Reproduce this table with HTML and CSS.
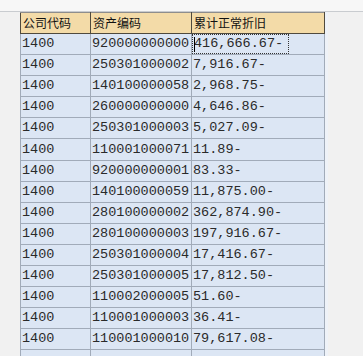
FILE: index.html
```html
<!DOCTYPE html>
<html>
<head>
<meta charset="utf-8">
<link rel="stylesheet" href="styles.css">
</head>
<body>
<div class="topbar"></div>
<div class="area">
<table class="grid">
<colgroup><col class="c1"><col class="c2"><col class="c3"></colgroup>
<thead>
<tr><th>公司代码</th><th>资产编码</th><th>累计正常折旧</th></tr>
</thead>
<tbody>
<tr><td>1400</td><td>920000000000</td><td><span class="focus"><span class="caret"></span>416,666.67-</span></td></tr>
<tr><td>1400</td><td>250301000002</td><td>7,916.67-</td></tr>
<tr><td>1400</td><td>140100000058</td><td>2,968.75-</td></tr>
<tr><td>1400</td><td>260000000000</td><td>4,646.86-</td></tr>
<tr><td>1400</td><td>250301000003</td><td>5,027.09-</td></tr>
<tr><td>1400</td><td>110001000071</td><td>11.89-</td></tr>
<tr><td>1400</td><td>920000000001</td><td>83.33-</td></tr>
<tr><td>1400</td><td>140100000059</td><td>11,875.00-</td></tr>
<tr><td>1400</td><td>280100000002</td><td>362,874.90-</td></tr>
<tr><td>1400</td><td>280100000003</td><td>197,916.67-</td></tr>
<tr><td>1400</td><td>250301000004</td><td>17,416.67-</td></tr>
<tr><td>1400</td><td>250301000005</td><td>17,812.50-</td></tr>
<tr><td>1400</td><td>110002000005</td><td>51.60-</td></tr>
<tr><td>1400</td><td>110001000003</td><td>36.41-</td></tr>
<tr><td>1400</td><td>110001000010</td><td>79,617.08-</td></tr>
<tr><td></td><td></td><td></td></tr>
</tbody>
</table>
</div>
</body>
</html>
```
FILE: styles.css
```css
html, body {
  margin: 0;
  padding: 0;
  background: #f1f1f1;
  overflow: hidden;
  height: 356px;
}
.topbar {
  height: 11px;
  background: #f7f7f7;
  border-bottom: 1px solid #c9ccd0;
}
.area {
  padding-left: 20px;
}
.grid {
  border-collapse: collapse;
  table-layout: fixed;
  width: 304px;
  box-shadow: 3px 0 0 #eef2f8;
}
.c1 { width: 70px; }
.c2 { width: 101px; }
.c3 { width: 133px; }
.grid th {
  height: 20px;
  padding: 0 0 0 2px;
  background: #f3dba8;
  border: 1px solid #4f4a3e;
  border-top-color: #8d8d8d;
  text-align: left;
  font-family: "Noto Sans CJK SC", sans-serif;
  font-weight: normal;
  font-size: 12px;
  color: #111;
  line-height: 20px;
  white-space: nowrap;
  overflow: hidden;
}
.grid td {
  height: 20.1px;
  padding: 0 0 0 1px;
  background: #dce6f4;
  border: 1px solid #a1abb9;
  border-top: none;
  font-family: "Liberation Mono", monospace;
  font-size: 13.5px;
  color: #2a2a2a;
  line-height: 20px;
  white-space: nowrap;
  overflow: hidden;
}
.focus {
  position: relative;
  display: inline-block;
  vertical-align: top;
  margin-top: 1px;
  line-height: 18px;
  padding: 0 5px 0 1px;
  outline: 1px dotted #333;
  outline-offset: 0;
}
.caret {
  position: absolute;
  left: 1px;
  top: 2px;
  width: 1px;
  height: 15px;
  background: #000;
}
```
